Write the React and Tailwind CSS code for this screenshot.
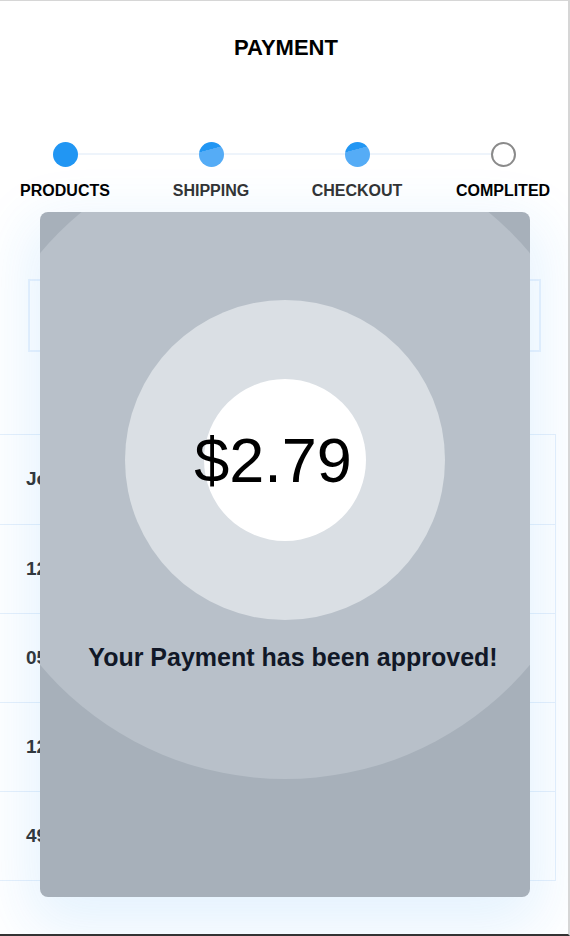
const steps = [
  { label: 'PRODUCTS', state: 'done', tone: 'text-black' },
  { label: 'SHIPPING', state: 'active', tone: 'text-[#333]' },
  { label: 'CHECKOUT', state: 'active', tone: 'text-[#333]' },
  { label: 'COMPLITED', state: 'todo', tone: 'text-black' },
]

const rows = ['Job', '12', '05', '12', '49']

function StepDot({ state }) {
  if (state === 'done') return <div className="h-[25px] w-[25px] rounded-full bg-[#2196f3]" />
  if (state === 'active')
    return (
      <div className="h-[25px] w-[25px] rounded-full bg-[linear-gradient(165deg,#2196f3_32%,#55acf6_33%)]" />
    )
  return <div className="h-[25px] w-[25px] rounded-full border-2 border-[#8a8a8a] bg-white" />
}

function Stepper() {
  return (
    <div className="relative mx-[19px] mt-[80px] flex justify-between">
      {/* track behind the dots */}
      <div className="absolute left-[46px] right-[46px] top-[11px] h-[2px] bg-[#eef4fb]" />
      {steps.map((s) => (
        <div key={s.label} className="relative flex w-[92px] flex-col items-center">
          <StepDot state={s.state} />
          <span className={`mt-[14px] whitespace-nowrap text-[16px] font-bold leading-[19px] ${s.tone}`}>
            {s.label}
          </span>
        </div>
      ))}
    </div>
  )
}

function ApprovedModal() {
  return (
    <div className="absolute left-[40px] top-[211px] flex h-[685px] w-[490px] flex-col items-center overflow-hidden rounded-lg bg-[#a7b0ba] shadow-[0_20px_60px_10px_rgba(33,150,243,0.12)]">
      <div className="mt-[-73px] flex h-[640px] w-[640px] shrink-0 flex-col items-center rounded-full bg-[#b8c0c9] pt-[161px]">
        <div className="flex h-[320px] w-[320px] shrink-0 items-center justify-center rounded-full bg-[#dadfe4]">
          <div className="flex h-[162px] w-[162px] items-center justify-center rounded-full bg-white">
            <span className="mr-[24px] whitespace-nowrap text-[63px] leading-none text-black">$2.79</span>
          </div>
        </div>
        <p className="mt-[22px] ml-[16px] whitespace-nowrap text-[25px] font-bold leading-[30px] text-[#111827]">
          Your Payment has been approved!
        </p>
      </div>
    </div>
  )
}

export default function App() {
  return (
    <div
      className="relative h-[936px] w-[570px] overflow-hidden border-t border-r-2 border-b-2 border-t-[#d6d6d6] border-r-[#d6d6d6] border-b-[#333] bg-white"
      style={{ fontFamily: '"Liberation Sans", Arial, sans-serif' }}
    >
      <h1 className="pt-[33px] pl-[4px] text-center text-[22px] font-bold leading-[28px] text-black">PAYMENT</h1>

      <Stepper />

      {/* summary box */}
      <div className="mx-[28px] mt-[79px] h-[73px] w-[513px] border-2 border-[#eaf3fd]" />

      {/* table */}
      <div className="mt-[82px] w-[556px] border-y border-r border-[#e6f0fb]">
        {rows.map((r, i) => (
          <div
            key={i}
            className={`flex h-[89px] items-center pl-[26px] text-[19px] font-bold text-[#333] ${
              i > 0 ? 'border-t border-[#e6f0fb]' : ''
            }`}
          >
            {r}
          </div>
        ))}
      </div>

      <ApprovedModal />
    </div>
  )
}
